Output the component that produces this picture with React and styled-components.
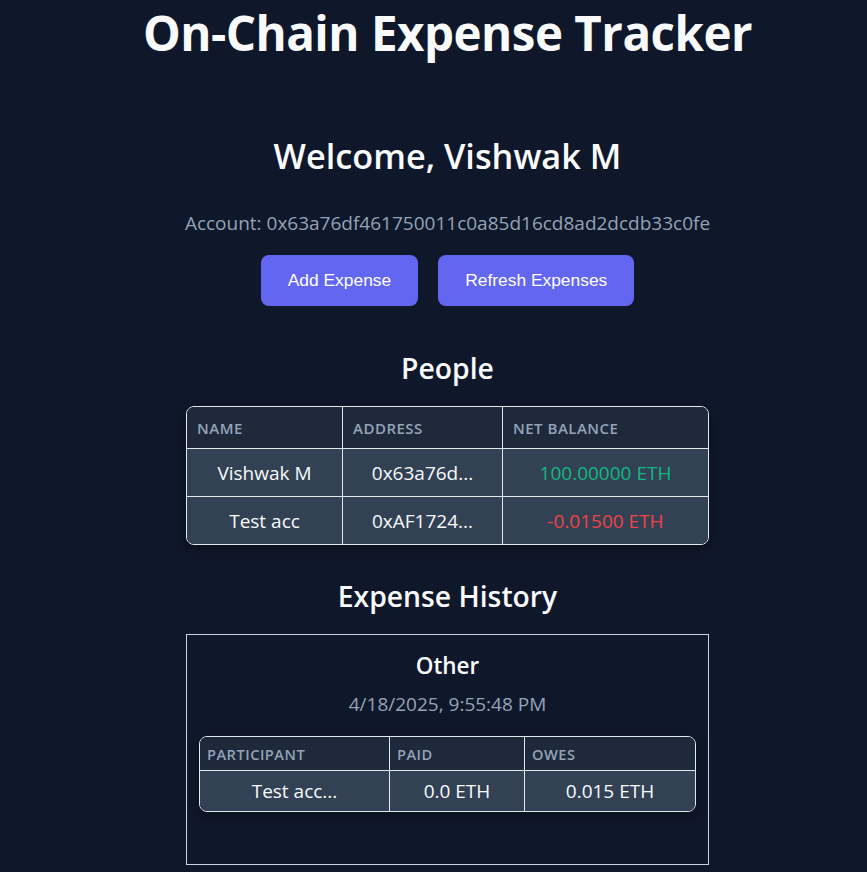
import React from "react";
import styled, { createGlobalStyle } from "styled-components";

const people = [
  { name: "Vishwak M", address: "0x63a76d...", balance: "100.00000 ETH", positive: true },
  { name: "Test acc", address: "0xAF1724...", balance: "-0.01500 ETH", positive: false },
];

const expenses = [
  {
    title: "Other",
    date: "4/18/2025, 9:55:48 PM",
    rows: [{ participant: "Test acc...", paid: "0.0 ETH", owes: "0.015 ETH" }],
  },
];

export default function App() {
  return (
    <>
      <GlobalStyle />
      <Page>
        <Title>On-Chain Expense Tracker</Title>
        <Welcome>Welcome, Vishwak M</Welcome>
        <Account>Account: 0x63a76df461750011c0a85d16cd8ad2dcdb33c0fe</Account>
        <Actions>
          <Button>Add Expense</Button>
          <Button>Refresh Expenses</Button>
        </Actions>

        <SectionTitle top="44px" bottom="20px">People</SectionTitle>
        <Table width="523px">
          <colgroup>
            <col style={{ width: "156px" }} />
            <col style={{ width: "160px" }} />
            <col />
          </colgroup>
          <thead>
            <tr>
              <Th>Name</Th>
              <Th>Address</Th>
              <Th>Net Balance</Th>
            </tr>
          </thead>
          <tbody>
            {people.map((p) => (
              <tr key={p.name}>
                <Td>{p.name}</Td>
                <Td>{p.address}</Td>
                <Td tone={p.positive ? "up" : "down"}>{p.balance}</Td>
              </tr>
            ))}
          </tbody>
        </Table>

        <SectionTitle top="33px" bottom="20px">Expense History</SectionTitle>
        {expenses.map((e) => (
          <ExpenseCard key={e.date}>
            <ExpenseTitle>{e.title}</ExpenseTitle>
            <ExpenseDate>{e.date}</ExpenseDate>
            <Table width="497px" $compact>
              <colgroup>
                <col style={{ width: "190px" }} />
                <col style={{ width: "135px" }} />
                <col />
              </colgroup>
              <thead>
                <tr>
                  <Th $compact>Participant</Th>
                  <Th $compact>Paid</Th>
                  <Th $compact>Owes</Th>
                </tr>
              </thead>
              <tbody>
                {e.rows.map((r) => (
                  <tr key={r.participant}>
                    <Td $compact>{r.participant}</Td>
                    <Td $compact>{r.paid}</Td>
                    <Td $compact>{r.owes}</Td>
                  </tr>
                ))}
              </tbody>
            </Table>
          </ExpenseCard>
        ))}
      </Page>
    </>
  );
}

const GlobalStyle = createGlobalStyle`
  body {
    margin: 0;
    background-color: #0f172a;
    color: #f8fafc;
    font-family: "Open Sans", "Noto Sans", sans-serif;
  }
`;

const Page = styled.div`
  display: flex;
  flex-direction: column;
  align-items: center;
  padding-left: 28px;
  min-height: 872px;
`;

const Title = styled.h1`
  margin: 0;
  font-size: 47.5px;
  font-weight: 700;
  line-height: 66px;
  letter-spacing: -0.5px;
  color: #f8fafc;
`;

const Welcome = styled.h2`
  margin: 69px 0 0;
  font-size: 34.3px;
  font-weight: 600;
  line-height: 42px;
  color: #f8fafc;
`;

const Account = styled.p`
  margin: 34px 0 0;
  font-size: 19px;
  line-height: 24px;
  color: #94a3b8;
`;

const Actions = styled.div`
  display: flex;
  gap: 20px;
  margin-top: 20px;
`;

const Button = styled.button`
  height: 51px;
  padding: 0 27px;
  border: none;
  border-radius: 8px;
  background-color: #6366f1;
  color: #ffffff;
  font-family: "Liberation Sans", Arial, sans-serif;
  font-size: 17.4px;
  cursor: pointer;
`;

const SectionTitle = styled.h3`
  margin: ${({ top }) => top} 0 ${({ bottom }) => bottom};
  font-size: 28.3px;
  font-weight: 600;
  line-height: 36px;
  color: #f8fafc;
`;

const Table = styled.table`
  width: ${({ width }) => width};
  border-collapse: separate;
  border-spacing: 0;
  border: 1px solid #e2e8f0;
  border-radius: 8px;
  overflow: hidden;
  box-shadow: 0 4px 10px rgba(0, 0, 0, 0.35);
  table-layout: fixed;
`;

const Th = styled.th`
  height: ${({ $compact }) => ($compact ? "33px" : "41px")};
  padding: 0 ${({ $compact }) => ($compact ? "7px" : "10px")};
  background-color: #1e293b;
  color: #94a3b8;
  text-align: left;
  text-transform: uppercase;
  font-size: ${({ $compact }) => ($compact ? "14.6px" : "15px")};
  font-weight: 600;
  letter-spacing: 0.5px;
  border-right: 1px solid #e2e8f0;
  border-bottom: 1px solid #e2e8f0;
  &:last-child {
    border-right: none;
  }
`;

const Td = styled.td`
  height: ${({ $compact }) => ($compact ? "40px" : "47px")};
  padding: 0 10px;
  background-color: #334155;
  text-align: center;
  font-size: 19px;
  color: ${({ tone }) =>
    tone === "up" ? "#10b981" : tone === "down" ? "#ef4444" : "#f8fafc"};
  border-right: 1px solid #e2e8f0;
  border-bottom: 1px solid #e2e8f0;
  &:last-child {
    border-right: none;
  }
  tr:last-child > & {
    border-bottom: none;
  }
`;

const ExpenseCard = styled.div`
  width: 521px;
  height: 229px;
  border: 1px solid #cbd5e1;
  display: flex;
  flex-direction: column;
  align-items: center;
`;

const ExpenseTitle = styled.h4`
  margin: 17px 0 0;
  font-size: 22.5px;
  font-weight: 600;
  line-height: 28px;
  color: #f8fafc;
`;

const ExpenseDate = styled.p`
  margin: 12px 0 20px;
  font-size: 19px;
  line-height: 24px;
  color: #94a3b8;
`;
